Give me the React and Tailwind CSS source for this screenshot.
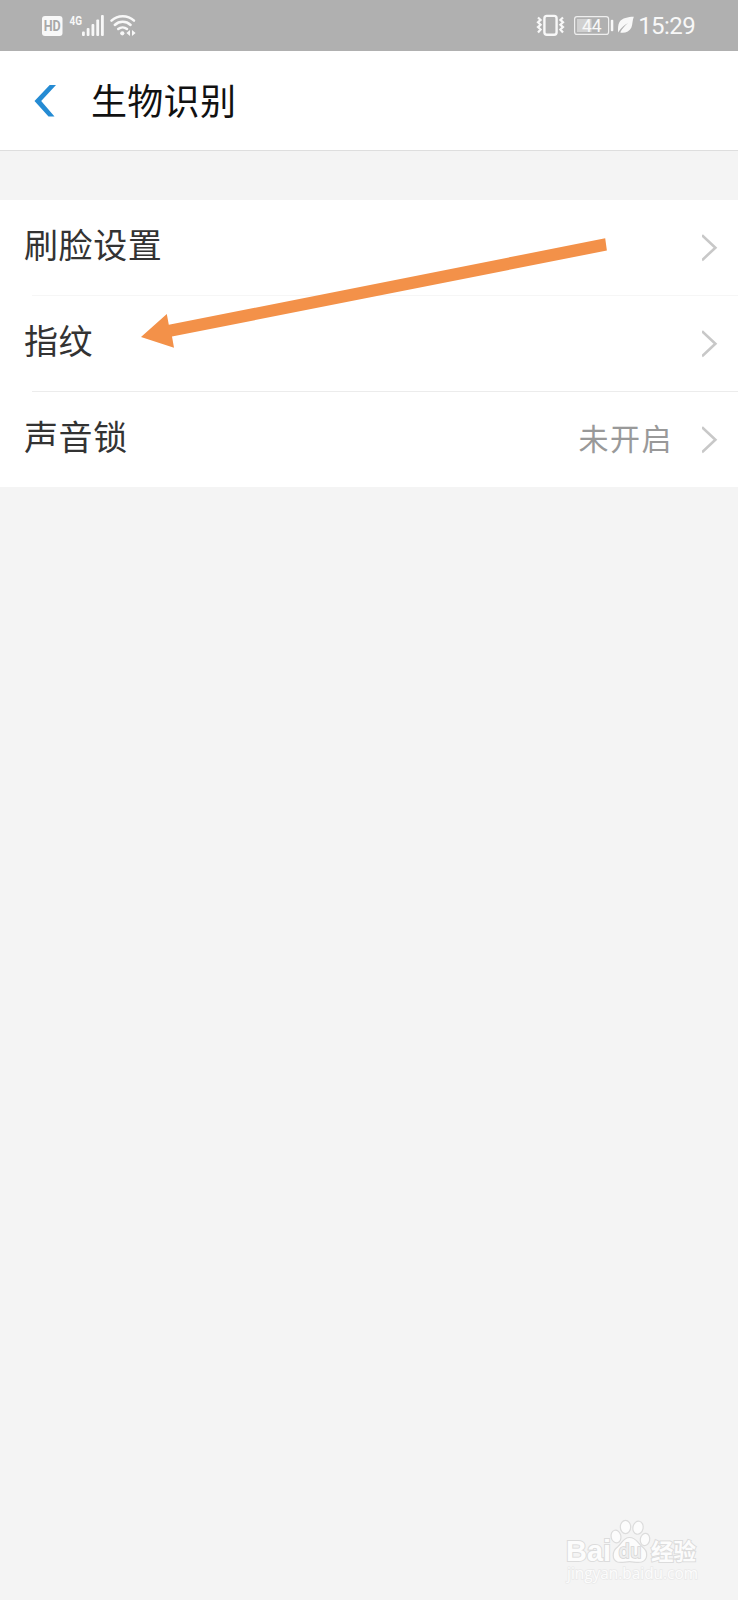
import React from "react";

const items = [
  { label: "刷脸设置", height: "h-24", line: "bg-[#f6f6f6]" },
  { label: "指纹", height: "h-24", line: "bg-[#ececec]" },
  { label: "声音锁", value: "未开启", height: "h-[95px]" },
];

function StatusBar() {
  return (
    <div className="h-[51px] bg-[#b0b0b0] flex items-center justify-between">
      {/* HD, signal, wifi */}
      <svg width="140" height="51" viewBox="0 0 140 51" fill="#f8f8f8">
        <rect x="42" y="16" width="20.5" height="20" rx="3" />
        <text x="52.2" y="31" textAnchor="middle" textLength="17" lengthAdjust="spacingAndGlyphs" fill="#a8a8a8" className="font-['Roboto',sans-serif] text-[14px] font-bold">HD</text>
        <text x="69.5" y="24.5" textLength="12.5" lengthAdjust="spacingAndGlyphs" className="font-['Roboto',sans-serif] text-[13px] font-bold">4G</text>
        <rect x="82" y="31.5" width="2.8" height="4.5" rx="1" />
        <rect x="86.7" y="28" width="2.8" height="8" rx="1" />
        <rect x="91.5" y="24" width="2.8" height="12" rx="1" />
        <rect x="96.3" y="19.5" width="2.8" height="16.5" rx="1" />
        <rect x="101" y="15" width="2.8" height="21" rx="1" />
        <g fill="none" stroke="#f8f8f8" strokeWidth="2.5" strokeLinecap="round">
          <path d="M111.5 20.6a16.5 16.5 0 0 1 22.5 0" />
          <path d="M114.8 25a11.5 11.5 0 0 1 15.8 0" />
          <path d="M118.2 29a6.8 6.8 0 0 1 8.8 0" />
        </g>
        <circle cx="122.3" cy="33.3" r="2.1" />
        <path d="M130 30v6l-3.6-3zM132 30v6l3.6-3z" />
      </svg>
      {/* vibrate, battery, leaf, clock */}
      <svg width="208" height="51" viewBox="530 0 208 51" fill="#f8f8f8">
        <rect x="544.4" y="15.9" width="12.2" height="18.9" rx="2.5" fill="none" stroke="#f8f8f8" strokeWidth="2.4" />
        <path d="M538 17.5l2.6 2.4-2.6 2.4 2.6 2.4-2.6 2.4 2.6 2.4-2.6 3M563 17.5l-2.6 2.4 2.6 2.4-2.6 2.4 2.6 2.4-2.6 2.4 2.6 3" fill="none" stroke="#f8f8f8" strokeWidth="2.2" />
        <rect x="577" y="19" width="14.5" height="13" fill="#d0d0d0" />
        <rect x="574.6" y="16.6" width="34" height="17.8" rx="2.5" fill="none" stroke="#eeeeee" strokeWidth="1.2" />
        <rect x="610.8" y="19.7" width="2.5" height="11.6" rx="1" />
        <text x="591.8" y="31.5" textAnchor="middle" className="font-['Roboto',sans-serif] text-[17.5px]">44</text>
        <path d="M633.8 16.8c-5.8.1-11.5 1.3-14.3 5.2-1.7 2.7-1.5 6.5-1.5 10.4 3.8-4.9 6.4-7.2 10.4-9.6-3.800 3.200-6.400 6-8.200 9.800 4.6.9 9.200-.8 11.200-5.100 1.300-3 .9-7 2.400-10.700z" />
        <text x="638.2" y="34" textLength="57.5" className="font-['Roboto',sans-serif] text-[24px]">15:29</text>
      </svg>
    </div>
  );
}

function Header() {
  return (
    <div className="h-[100px] bg-white border-b border-[#dedede] flex items-center">
      <svg className="ml-[34px]" width="23" height="32" viewBox="0 0 23 32">
        <path d="M15.7 0H22L7.2 16 20.5 31.5H14.5L.5 16z" fill="#258bd3" />
      </svg>
      <h1 className="ml-[34px] mb-1 text-[36px] tracking-[0.3px] leading-none text-[#111]">生物识别</h1>
    </div>
  );
}

function Chevron() {
  return (
    <svg width="17" height="28" viewBox="0 0 17 28" fill="none" stroke="#c8c8c8" strokeWidth="2.6">
      <path d="M0 1.2L13.4 13.7 0 26.200" />
    </svg>
  );
}

function Arrow() {
  return (
    <svg className="absolute left-[140px] top-[38px] pointer-events-none" width="470" height="112" viewBox="140 238 470 112">
      <path d="M141 337L166.8 314l2 10.800L605.200 238.300l1.700 12.200L172 336.500l2 11.200z" fill="#f39149" />
    </svg>
  );
}

function Watermark() {
  return (
    <svg className="ml-auto" width="188" height="100" viewBox="550 1500 188 100">
      <g fill="#fcfcfc" stroke="#dcdcdc" strokeWidth="1.2">
        <ellipse cx="616" cy="1536.5" rx="4.9" ry="6.4" transform="rotate(-12 616 1536.5)" />
        <ellipse cx="625.5" cy="1527" rx="5.2" ry="6.7" />
        <ellipse cx="638" cy="1527.7" rx="5.1" ry="6.6" transform="rotate(12 638 1527.7)" />
        <ellipse cx="645" cy="1539.5" rx="4.7" ry="6.2" transform="rotate(10 645 1539.5)" />
        <path d="M629.5 1537.5c7 0 8.5 6 13 9.5 6 4.5 5.5 13-1 15-4 1-8-.3-12-.3s-8 1.3-12 .3c-5.5-2-6-10.5 0-15 5-4 5.500-9.500 12-9.500z" />
        <text x="566" y="1561" textLength="45" lengthAdjust="spacingAndGlyphs" strokeWidth="2" paintOrder="stroke" className="font-['Liberation_Sans',sans-serif] text-[29px] font-bold">Bai</text>
        <text x="651" y="1560" textLength="45" lengthAdjust="spacingAndGlyphs" strokeWidth="2" paintOrder="stroke" className="font-['Noto_Sans_CJK_SC',sans-serif] text-[23px] font-bold">经验</text>
        <text x="567" y="1579" textLength="131" lengthAdjust="spacingAndGlyphs" strokeWidth="1.4" paintOrder="stroke" stroke="#e9e9e9" className="font-['Open_Sans',sans-serif] text-[15.5px]">jingyan.baidu.com</text>
      </g>
      <text x="618.5" y="1558" textLength="23" lengthAdjust="spacingAndGlyphs" fill="#eeeeee" stroke="#d4d4d4" strokeWidth="1.6" paintOrder="stroke" className="font-['Open_Sans',sans-serif] text-[20px] font-semibold">du</text>
    </svg>
  );
}

export default function App() {
  return (
    <div className="w-full min-h-[1600px] bg-[#f4f4f4] flex flex-col font-['Noto_Sans_CJK_SC',sans-serif]">
      <StatusBar />
      <Header />

      <div className="relative mt-[49px] bg-white">
        {items.map((item, idx) => (
          <div key={item.label} className={item.height}>
            <div className="h-[95px] pl-6 pr-[19px] flex items-center">
              <span className="text-[34px] tracking-[0.6px] leading-none text-[#333] -mt-2">{item.label}</span>
              <span className="ml-auto mr-[29px] -mt-1.5 text-[30px] tracking-[1.5px] leading-none text-[#999]">{item.value}</span>
              <Chevron />
            </div>
            {idx < items.length - 1 && <div className={`ml-8 h-px ${item.line}`} />}
          </div>
        ))}
        <Arrow />
      </div>

      <div className="mt-auto flex">
        <Watermark />
      </div>
    </div>
  );
}
